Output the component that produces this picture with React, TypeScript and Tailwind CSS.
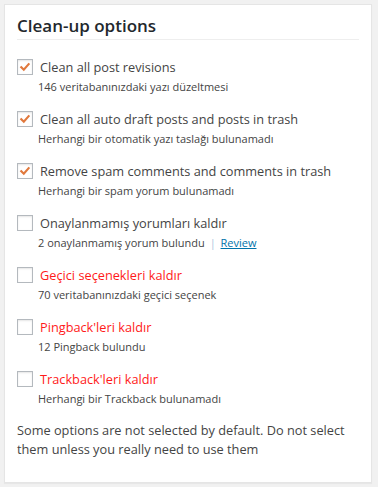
import React from "react";

type Item = { label: string; desc: React.ReactNode; checked: boolean; red?: boolean };

const items: Item[] = [
  { label: "Clean all post revisions", desc: "146 veritabanınızdaki yazı düzeltmesi", checked: true },
  { label: "Clean all auto draft posts and posts in trash", desc: "Herhangi bir otomatik yazı taslağı bulunamadı", checked: true },
  { label: "Remove spam comments and comments in trash", desc: "Herhangi bir spam yorum bulunamadı", checked: true },
  {
    label: "Onaylanmamış yorumları kaldır",
    desc: (
      <>
        2 onaylanmamış yorum bulundu <span className="text-[#a7c4de] mx-[2px]">|</span>{" "}
        <a className="text-[#0073aa] underline">Review</a>
      </>
    ),
    checked: false,
  },
  { label: "Geçici seçenekleri kaldır", desc: "70 veritabanınızdaki geçici seçenek", checked: false, red: true },
  { label: "Pingback'leri kaldır", desc: "12 Pingback bulundu", checked: false, red: true },
  { label: "Trackback'leri kaldır", desc: "Herhangi bir Trackback bulunamadı", checked: false, red: true },
];

function Box({ checked }: { checked: boolean }) {
  return (
    <div className="w-4 h-4 border border-[#b4b9be] bg-white shadow-[inset_0_1px_2px_rgba(0,0,0,0.1)] flex items-center justify-center shrink-0">
      {checked && (
        <svg width="12" height="12" viewBox="0 0 12 12">
          <path d="M2.3 6.2 L4.8 8.7 L9.6 3.2" fill="none" stroke="#e1793d" strokeWidth="2.2" strokeLinecap="square" />
        </svg>
      )}
    </div>
  );
}

export default function App() {
  return (
    <div className="w-[378px] h-[487px] bg-[#f1f1f1] p-[4px] font-['Open_Sans',sans-serif]">
      <div className="w-[368px] h-[479px] bg-white border border-[#e5e5e5] shadow-[0_1px_1px_rgba(0,0,0,0.04)] px-[12px] pt-[10px]">
        <h2 className="text-[17px] font-semibold text-[#23282d] leading-[22px] pb-[2px] border-b border-[#eeeeee] w-[342px]">
          Clean-up options
        </h2>
        <div className="flex flex-col pt-[19px]">
          {items.map((it, i) => (
            <div key={i} className="h-[52px]">
              <div className="flex items-center gap-[7px]">
                <Box checked={it.checked} />
                <span className={`text-[12.75px] leading-[16px] ${it.red ? "text-[#ff1a1a]" : "text-[#444]"}`}>{it.label}</span>
              </div>
              <div className="text-[11px] leading-[14px] text-[#444] pl-[21px] mt-[5px]">{it.desc}</div>
            </div>
          ))}
        </div>
        <p className="text-[12.75px] leading-[19px] text-[#444] -mt-[2px]">
          Some options are not selected by default. Do not select them unless you really need to use them
        </p>
      </div>
    </div>
  );
}
